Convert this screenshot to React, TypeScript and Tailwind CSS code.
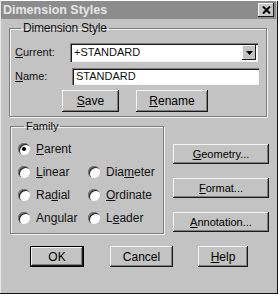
import React from "react";

const btn =
    "flex items-center justify-center bg-[#c3c3c3] text-black shadow-[inset_-1px_-1px_#1a1a1a,inset_1px_1px_#f4f4f4,inset_-2px_-2px_#7e7e7e]";

const U = ({ children }: { children: React.ReactNode }) => <span className="underline underline-offset-[1px]">{children}</span>;

const Radio = ({ checked, children }: { checked?: boolean; children: React.ReactNode }) => (
    <div className="flex items-center h-[14px]">
        <span className="relative w-[12px] h-[12px] rounded-full bg-white shadow-[inset_1px_1px_#7e7e7e,inset_2px_2px_#2a2a2a] flex items-center justify-center">
            {checked && <span className="w-[4px] h-[4px] rounded-full bg-black" />}
        </span>
        <span className="ml-[6px]">{children}</span>
    </div>
);

export default function App() {
    return (
        <div className="w-[280px] h-[296px] bg-white font-['Liberation_Sans',Arial,sans-serif] text-[11px] leading-none text-[#111] overflow-hidden">
            <div className="w-[278px] h-[293px] bg-[#c3c3c3] border-r border-b border-[#111] shadow-[inset_1px_1px_#e8e8e8]">
                {/* title bar */}
                <div className="h-[18px] mx-[1px] mt-[1px] bg-[#8c8c8c] flex items-center justify-between pl-[2px] pr-[2px]">
                    <span className="font-bold text-[12.5px] text-[#e6e6e6]">Dimension Styles</span>
                    <span className="w-[16px] h-[14px] bg-[#c8c8c8] shadow-[inset_-1px_-1px_#1a1a1a,inset_1px_1px_#f4f4f4] flex items-center justify-center">
                        <svg width="9" height="8" viewBox="0 0 9 8">
                            <path d="M1 0.5 L8 7.5 M8 0.5 L1 7.5" stroke="#000" strokeWidth="2" />
                        </svg>
                    </span>
                </div>

                {/* dimension style group */}
                <fieldset className="ml-[9px] mt-[3px] w-[258px] h-[95px] border border-[#7e7e7e] shadow-[1px_1px_#f4f4f4,inset_1px_1px_#f4f4f4] px-[5px]">
                    <legend className="ml-[6px] px-[2px] text-[12px] tracking-[-0.2px]">Dimension Style</legend>
                    <div className="flex items-center mt-[9px]">
                        <span className="w-[55px]">
                            <U>C</U>urrent:
                        </span>
                        <div className="w-[188px] h-[19px] bg-white shadow-[inset_1px_1px_#7e7e7e,inset_2px_2px_#1a1a1a,inset_-1px_-1px_#f4f4f4] flex items-center justify-between pl-[4px] pr-[2px]">
                            <span className="text-[11px]">+STANDARD</span>
                            <span className="w-[14px] h-[15px] bg-[#c3c3c3] shadow-[inset_-1px_-1px_#1a1a1a,inset_1px_1px_#f4f4f4] flex items-center justify-center">
                                <svg width="7" height="4" viewBox="0 0 7 4">
                                    <path d="M0 0 H7 L3.5 4 Z" fill="#000" />
                                </svg>
                            </span>
                        </div>
                    </div>
                    <div className="flex items-center mt-[6px]">
                        <span className="w-[57px]">
                            <U>N</U>ame:
                        </span>
                        <div className="w-[187px] h-[17px] bg-white shadow-[inset_1px_1px_#7e7e7e,inset_2px_2px_#1a1a1a,inset_-1px_-1px_#f4f4f4] flex items-center pl-[4px]">
                            <span>STANDARD</span>
                        </div>
                    </div>
                    <div className="flex mt-[5px] ml-[47px] gap-[17px] text-[12px]">
                        <div className={`${btn} w-[57px] h-[22px]`}>
                            <span>
                                <U>S</U>ave
                            </span>
                        </div>
                        <div className={`${btn} w-[72px] h-[22px]`}>
                            <span>
                                <U>R</U>ename
                            </span>
                        </div>
                    </div>
                </fieldset>

                {/* family + side buttons */}
                <div className="flex ml-[10px] mt-[4px]">
                    <fieldset className="w-[154px] h-[113px] border border-[#7e7e7e] shadow-[1px_1px_#f4f4f4,inset_1px_1px_#f4f4f4] pl-[7px]">
                        <legend className="ml-[6px] px-[2px] text-[11px]">Family</legend>
                        <div className="grid grid-cols-[70px_70px] gap-y-[9px] mt-[10px] text-[12px]">
                            <Radio checked>
                                <U>P</U>arent
                            </Radio>
                            <span />
                            <Radio>
                                <U>L</U>inear
                            </Radio>
                            <Radio>
                                Dia<U>m</U>eter
                            </Radio>
                            <Radio>
                                Ra<U>d</U>ial
                            </Radio>
                            <Radio>
                                <U>O</U>rdinate
                            </Radio>
                            <Radio>
                                An<U>g</U>ular
                            </Radio>
                            <Radio>
                                L<U>e</U>ader
                            </Radio>
                        </div>
                    </fieldset>
                    <div className="flex flex-col ml-[9px] mt-[23px] gap-[14px] text-[11px]">
                        <div className={`${btn} w-[96px] h-[20px]`}>
                            <span>
                                <U>G</U>eometry...
                            </span>
                        </div>
                        <div className={`${btn} w-[96px] h-[20px]`}>
                            <span>
                                <U>F</U>ormat...
                            </span>
                        </div>
                        <div className={`${btn} w-[96px] h-[20px]`}>
                            <span>
                                <U>A</U>nnotation...
                            </span>
                        </div>
                    </div>
                </div>

                {/* bottom buttons */}
                <div className="flex mt-[12px] ml-[30px] text-[12px]">
                    <div className={`${btn} w-[54px] h-[21px] shadow-[inset_0_0_0_1px_#000,inset_-2px_-2px_#1a1a1a,inset_2px_2px_#f4f4f4,inset_-3px_-3px_#7e7e7e]`}>OK</div>
                    <div className={`${btn} w-[63px] h-[21px] ml-[26px]`}>Cancel</div>
                    <div className={`${btn} w-[50px] h-[21px] ml-[25px]`}>
                        <span>
                            <U>H</U>elp
                        </span>
                    </div>
                </div>
            </div>
        </div>
    );
}
